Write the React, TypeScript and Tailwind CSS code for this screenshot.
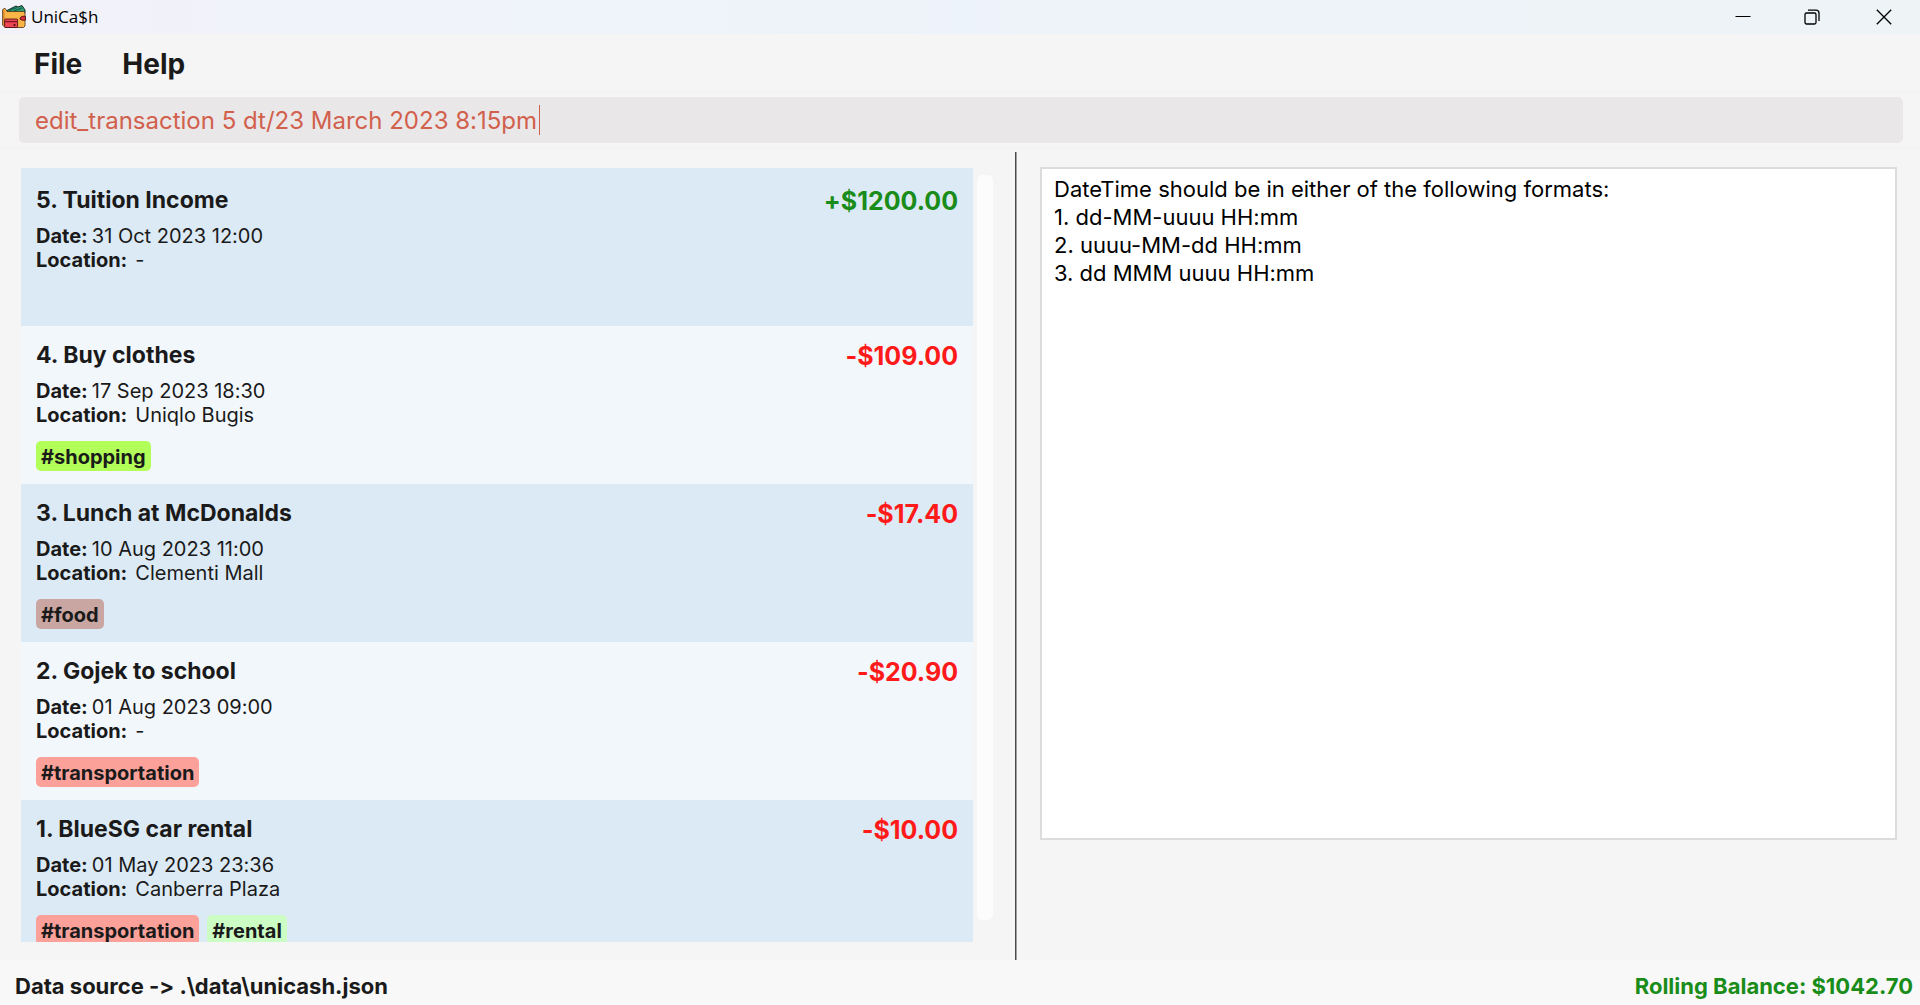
import React from 'react';

type Tag = { name: string; color: string };
type Transaction = {
  id: number;
  name: string;
  amount: string;
  income?: boolean;
  date: string;
  location: string;
  tags: Tag[];
};

const transactions: Transaction[] = [
  { id: 5, name: 'Tuition Income', amount: '+$1200.00', income: true, date: '31 Oct 2023 12:00', location: '-', tags: [] },
  { id: 4, name: 'Buy clothes', amount: '-$109.00', date: '17 Sep 2023 18:30', location: 'Uniqlo Bugis', tags: [{ name: 'shopping', color: 'bg-[#b2ff59]' }] },
  { id: 3, name: 'Lunch at McDonalds', amount: '-$17.40', date: '10 Aug 2023 11:00', location: 'Clementi Mall', tags: [{ name: 'food', color: 'bg-[#c9a6a1]' }] },
  { id: 2, name: 'Gojek to school', amount: '-$20.90', date: '01 Aug 2023 09:00', location: '-', tags: [{ name: 'transportation', color: 'bg-[#fba19a]' }] },
  {
    id: 1,
    name: 'BlueSG car rental',
    amount: '-$10.00',
    date: '01 May 2023 23:36',
    location: 'Canberra Plaza',
    tags: [
      { name: 'transportation', color: 'bg-[#fba19a]' },
      { name: 'rental', color: 'bg-[#ccfdc5]' },
    ],
  },
];

const resultText = `DateTime should be in either of the following formats:
1. dd-MM-uuuu HH:mm
2. uuuu-MM-dd HH:mm
3. dd MMM uuuu HH:mm`;

function WalletIcon() {
  return (
    <svg viewBox="0 0 24 24" className="size-6" aria-hidden="true">
      <path d="M4 6 14 1l2 1 4-1.500L23 5v3H4z" fill="#2f9e78" stroke="#14281f" strokeWidth="1" />
      <path d="m7 5.500 8-3m-3 3.500 8-3" stroke="#145c45" strokeWidth="1.200" />
      <path d="M.6 4.500 3 3.200 5 6.500h16.500L23 8v13l-1.500 1.500H3L.6 20z" fill="#fbb546" stroke="#4a3013" strokeWidth=".8" />
      <path d="M1.200 4.800v15l1.300 1.500V5.800z" fill="#d9822b" />
      <path d="M18 13 20 11.300h3.500v3.900H20l-2-1z" fill="#d92b3a" stroke="#3c0d12" strokeWidth=".8" />
      <rect x="2.600" y="14" width="13" height="8.500" rx=".8" fill="#ee4652" stroke="#3c0d12" strokeWidth=".8" />
      <path d="M3.100 16h12v1.300h-12z" fill="#7d1520" />
      <circle cx="12.500" cy="20" r="1.100" fill="#3c0d12" />
    </svg>
  );
}

function TitleBar() {
  return (
    <header className="flex h-[34px] shrink-0 items-center justify-between bg-linear-to-r from-[#f2f2f9] via-[#edf3fa] to-[#eef3f6] pl-0.5">
      <div className="flex items-center gap-[5px]">
        <WalletIcon />
        <h1 className="font-['Open_Sans',sans-serif] text-[17px] text-black">UniCa$h</h1>
      </div>
      <div className="flex h-full items-center text-black">
        <button aria-label="Minimize" className="flex h-full w-[69px] items-center justify-center">
          <svg viewBox="0 0 16 16" className="size-4" fill="none" stroke="currentColor"><path d="M.5 7.500h15" /></svg>
        </button>
        <button aria-label="Restore" className="flex h-full w-[70px] items-center justify-center">
          <svg viewBox="0 0 16 16" className="size-4" fill="none" stroke="currentColor" strokeWidth="1.300">
            <rect x="1" y="4" width="11" height="11" rx="1.500" />
            <path d="M4 1.200h8a3 3 0 0 1 3 3V12" />
          </svg>
        </button>
        <button aria-label="Close" className="flex h-full w-[73px] items-center justify-center">
          <svg viewBox="0 0 16 16" className="size-4" fill="none" stroke="currentColor" strokeWidth="1.300"><path d="m.8.8 14.400 14.400M15.200.8.8 15.200" /></svg>
        </button>
      </div>
    </header>
  );
}

function TransactionCard({ transaction: t, shaded }: { transaction: Transaction; shaded: boolean }) {
  return (
    <li className={`flex h-[158px] shrink-0 flex-col justify-center px-[15px] ${shaded ? 'bg-[#dceaf5]' : 'bg-[#f2f7fc]'}`}>
      <div className="flex h-8 items-start justify-between font-bold">
        <h2 className="text-[23px] leading-8">{t.id}. {t.name}</h2>
        <span className={`text-[25px] leading-[34px] ${t.income ? 'text-[#198c19]' : 'text-[#ff1a1a]'}`}>{t.amount}</span>
      </div>
      <dl className="mt-2 text-xl leading-6">
        <div className="flex gap-x-1">
          <dt className="font-bold">Date:</dt>
          <dd>{t.date}</dd>
        </div>
        <div className="flex gap-x-2">
          <dt className="font-bold">Location:</dt>
          <dd>{t.location}</dd>
        </div>
      </dl>
      <ul className="mt-3.5 flex min-h-6 gap-2">
        {t.tags.map((tag) => (
          <li key={tag.name} className={`h-[30px] rounded-[5px] px-[5px] text-xl leading-8 font-bold ${tag.color}`}>
            #{tag.name}
          </li>
        ))}
      </ul>
    </li>
  );
}

export default function App() {
  return (
    <div className="flex h-screen flex-col bg-[#f5f5f5] font-['Inter',sans-serif] text-[#1a1a1a] [font-variant-ligatures:no-contextual]">
      <TitleBar />
      <nav className="flex h-[57px] shrink-0 items-center gap-10 px-[34px] pt-0.5 text-[28px] font-bold">
        <button>File</button>
        <button>Help</button>
      </nav>
      <div className="shrink-0 border-y border-[#f2f2f2] py-[5px] pr-[17px] pl-[19px]">
        <div className="relative h-[46px]">
          <input
            aria-label="Command"
            defaultValue="edit_transaction 5 dt/23 March 2023 8:15pm"
            className="size-full rounded-[5px] bg-[#eae7e8] px-4 text-2xl text-[#d1604c] caret-transparent outline-none"
          />
          <span aria-hidden="true" className="absolute top-2 left-[520px] h-[30px] w-px bg-[#d1604c]" />
        </div>
      </div>
      <main className="mt-[3px] grid min-h-0 flex-1 grid-cols-[1015fr_2px_903fr]">
        <section aria-label="Transactions" className="flex min-h-0 gap-1 pt-4 pr-[22px] pb-[18px] pl-[21px]">
          <ul className="flex min-w-0 flex-1 flex-col overflow-hidden">
            {transactions.map((t, i) => (
              <TransactionCard key={t.id} transaction={t} shaded={i % 2 === 0} />
            ))}
          </ul>
          <div className="mt-[7px] mb-[22px] w-4 rounded-[5px] bg-[#fcfcfc]" />
        </section>
        <div className="border-l border-[#4a4a4a] bg-[#a0a0a0]" />
        <section aria-label="Result" className="flex min-h-0 pt-[15px] pr-[23px] pb-[120px] pl-[23px]">
          <textarea
            readOnly
            aria-label="Result message"
            value={resultText}
            className="flex-1 resize-none border-2 border-[#dcdcdc] bg-white px-3 py-1.5 text-[22px] leading-[28px] text-black outline-none"
          />
        </section>
      </main>
      <footer className="flex h-[45px] shrink-0 items-center justify-between bg-[#f8f8f8] pt-2 pr-[7px] pl-[15px] text-[22px] font-bold">
        <span>Data source -&gt; .\data\unicash.json</span>
        <span className="text-[#198c19]">Rolling Balance: $1042.70</span>
      </footer>
    </div>
  );
}
